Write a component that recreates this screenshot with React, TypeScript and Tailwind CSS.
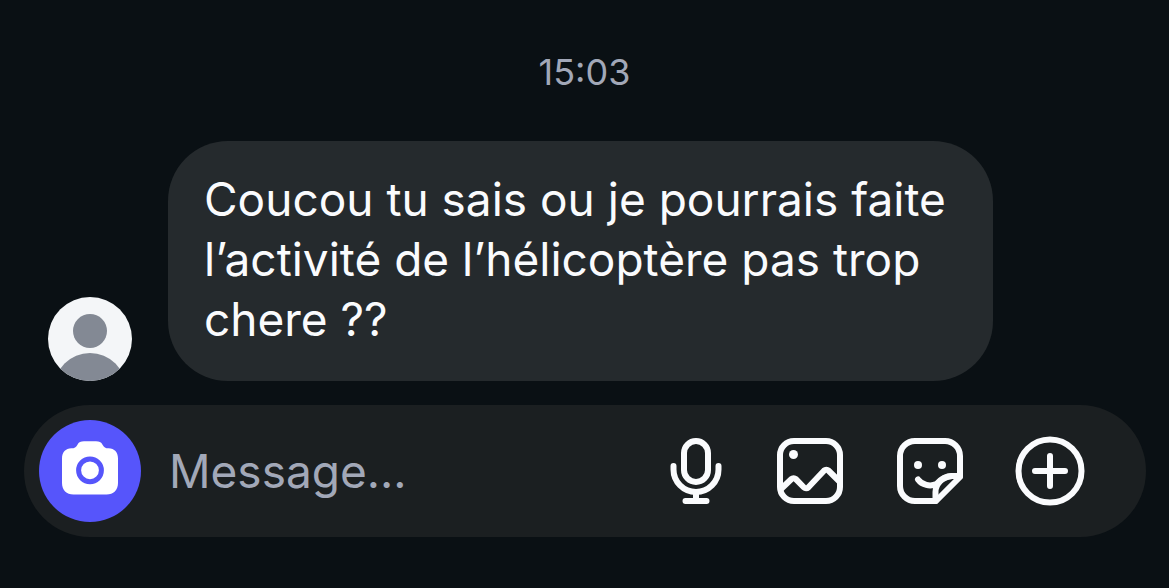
import { ReactNode } from "react";

const AvatarIcon = (): React.ReactElement => (
  <svg viewBox="0 0 84 84" className="size-21 shrink-0 rounded-full bg-[#f4f6f8]" aria-hidden="true">
    <circle cx="42" cy="34" r="17" fill="#838994" />
    <circle cx="42" cy="92" r="36" fill="#838994" />
  </svg>
);

const CameraIcon = (): React.ReactElement => (
  <svg viewBox="0 0 102 102" className="size-full" aria-hidden="true">
    <path
      d="M32.500 28.300c3 0 4.500-.8 5.800-3.300C39.800 22 41.800 21.300 45 21.300h12c3.200 0 5.200.7 6.700 3.700 1.300 2.500 2.800 3.300 5.800 3.300C75.500 28.300 79 32.500 79 38.500V63c0 7-4.500 11.500-11.500 11.500h-33C27.500 74.500 23 70 23 63V38.500C23 32.500 26.500 28.300 32.500 28.300z"
      fill="#fff"
    />
    <circle cx="51" cy="50.300" r="11.400" fill="none" stroke="#5655fb" strokeWidth="5" />
  </svg>
);

const MicIcon = (): React.ReactElement => (
  <>
    <rect x="30" y="6" width="24" height="41" rx="12" />
    <path d="M19.500 31v3.500a22.500 22.500 0 0 0 45 0V31M42 57v9M31.500 66h21" />
  </>
);

const PictureIcon = (): React.ReactElement => (
  <>
    <rect x="6" y="6" width="60" height="60" rx="14" />
    <circle cx="19.500" cy="19.500" r="4.500" fill="currentColor" stroke="none" />
    <path d="M7 54l10.500-10a3 3 0 0 1 4.200 0l8.300 8.500a3 3 0 0 0 4.200 0l16-17a3 3 0 0 1 4.200 0L65 46" />
  </>
);

const StickerIcon = (): React.ReactElement => (
  <>
    <path d="M66 42V21A15 15 0 0 0 51 6H21A15 15 0 0 0 6 21v30a15 15 0 0 0 15 15h21z" />
    <path d="M66 41h-8C48 42 41.500 49 41.500 57v9" />
    <path d="M24 44.500c4 5.500 12 7.500 18.500 4.500C46 45 51 41 58 41" />
    <circle cx="24" cy="30" r="4" fill="currentColor" stroke="none" />
    <circle cx="48" cy="30" r="4" fill="currentColor" stroke="none" />
  </>
);

const PlusIcon = (): React.ReactElement => (
  <>
    <circle cx="36" cy="36" r="31.500" />
    <path d="M36 21v30M21 36h30" />
  </>
);

interface ActionButtonProps {
  label: string;
  children: ReactNode;
}

const ActionButton = ({ label, children }: ActionButtonProps): React.ReactElement => (
  <button type="button" aria-label={label} className="size-18 shrink-0 text-[#fafbfd]">
    <svg
      viewBox="0 0 72 72"
      className="size-full"
      fill="none"
      stroke="currentColor"
      strokeWidth="6"
      strokeLinecap="round"
      strokeLinejoin="round"
      aria-hidden="true"
    >
      {children}
    </svg>
  </button>
);

const Composer = (): React.ReactElement => (
  <form className="mr-[23px] ml-6 mt-6 flex items-center rounded-full bg-[#1b1f21] py-[15px] pr-15 pl-[15px]">
    <button type="button" aria-label="Camera" className="size-[102px] shrink-0 rounded-full bg-[#5655fb]">
      <CameraIcon />
    </button>
    <input
      type="text"
      aria-label="Message"
      placeholder="Message..."
      className="ml-7 h-15 min-w-0 flex-1 bg-transparent text-[46px] text-white outline-none placeholder:text-[#a2a8b8]"
    />
    <div className="flex gap-12">
      <ActionButton label="Voice message">
        <MicIcon />
      </ActionButton>
      <ActionButton label="Gallery">
        <PictureIcon />
      </ActionButton>
      <ActionButton label="Stickers">
        <StickerIcon />
      </ActionButton>
      <ActionButton label="More">
        <PlusIcon />
      </ActionButton>
    </div>
  </form>
);

const App = (): React.ReactElement => {
  return (
    <main className="min-h-screen bg-[#0a1014] pt-12 font-['Inter',sans-serif]">
      <time className="block text-center text-[36px] leading-12 text-[#a2a8b8]">15:03</time>
      <div className="mt-[45px] flex items-end gap-9 px-12">
        <AvatarIcon />
        <p className="max-w-[825px] rounded-[60px] bg-[#252a2d] px-9 pt-7 pb-8 text-[46px] leading-15 text-[#fafbfd]">
          Coucou tu sais ou je pourrais faite l’activité de l’hélicoptère pas trop chere ??
        </p>
      </div>
      <Composer />
    </main>
  );
};

export default App;
